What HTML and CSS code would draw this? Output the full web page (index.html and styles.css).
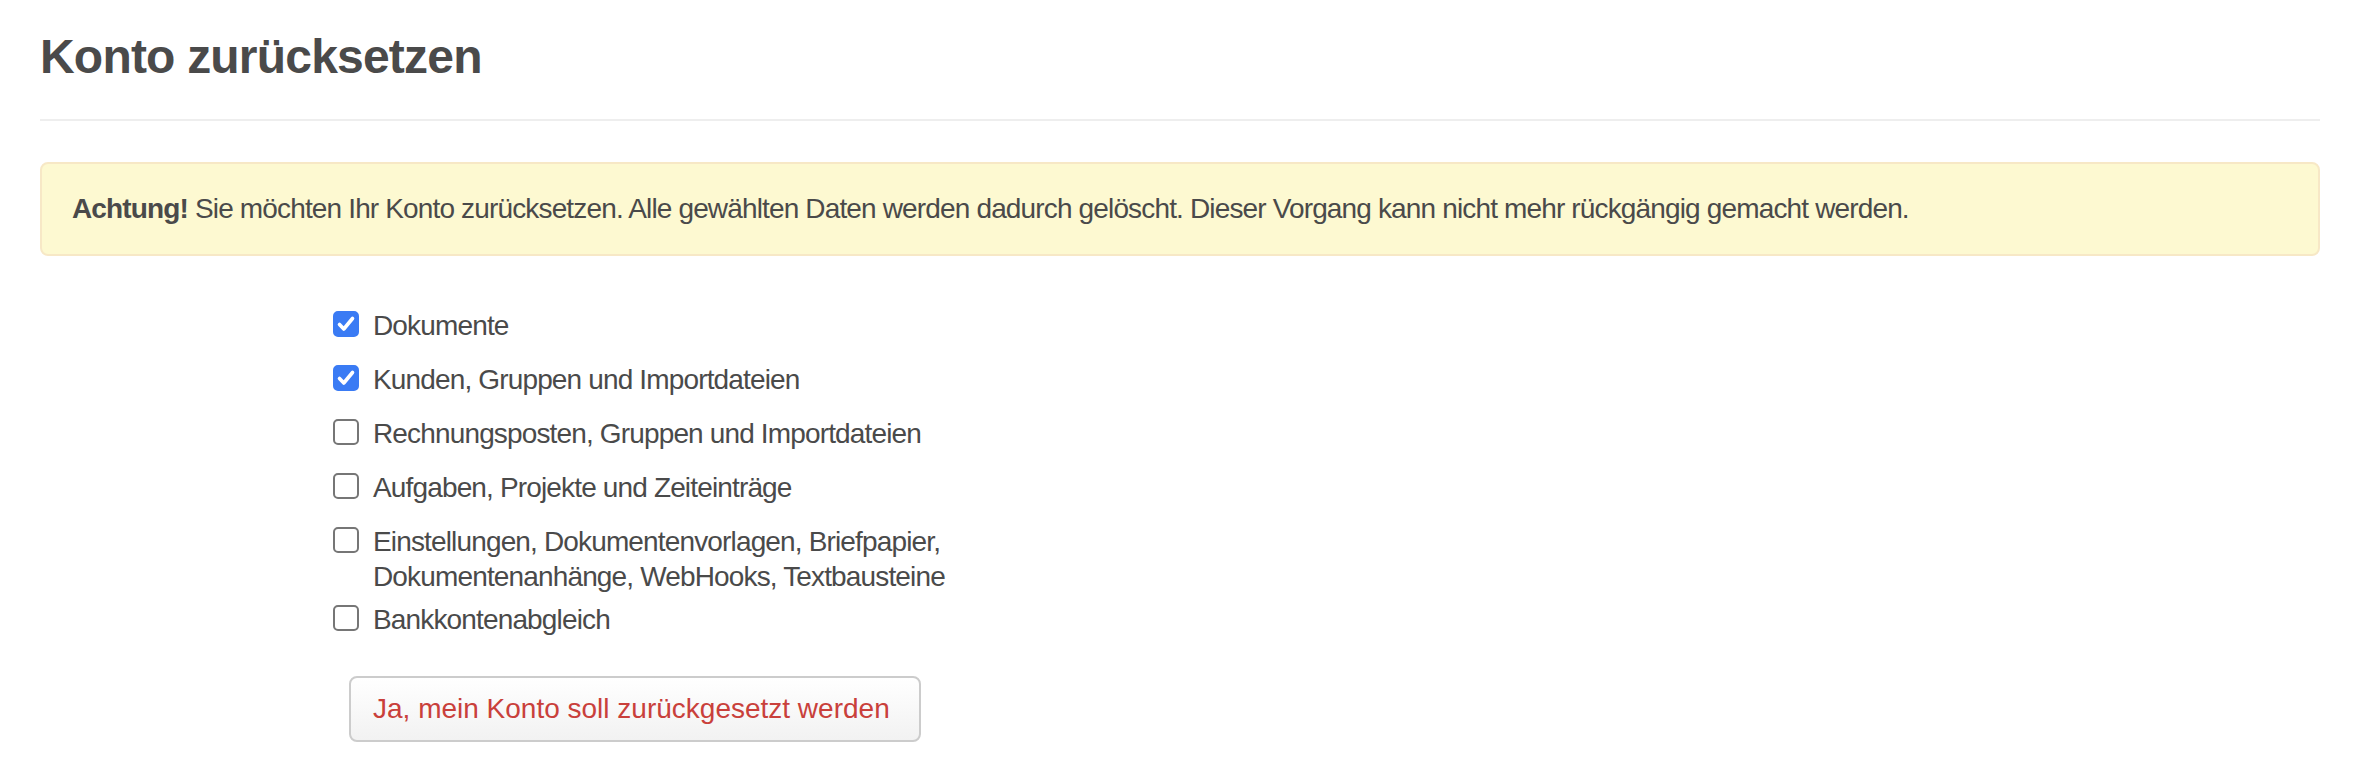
FILE: index.html
```html
<!DOCTYPE html>
<html lang="de">
<head>
  <meta charset="UTF-8" />
  <meta name="viewport" content="width=device-width, initial-scale=1.0"/>
  <title>Konto zurücksetzen</title>
  <link rel="stylesheet" href="styles.css">
</head>
<body>
  <div class="page-header">
    <h1>Konto zurücksetzen</h1>
  </div>

  <div class="alert">
    <strong>Achtung!</strong> Sie möchten Ihr Konto zurücksetzen. Alle gewählten Daten werden dadurch gelöscht. Dieser Vorgang kann nicht mehr rückgängig gemacht werden.
  </div>

  <form class="reset-form">
    <label class="option">
      <input type="checkbox" checked>
      <span class="box"><svg viewBox="0 0 26 26"><path d="M6.5 13.5 L10.8 18 L19.5 7.5"/></svg></span>
      <span class="text">Dokumente</span>
    </label>
    <label class="option">
      <input type="checkbox" checked>
      <span class="box"><svg viewBox="0 0 26 26"><path d="M6.5 13.5 L10.8 18 L19.5 7.5"/></svg></span>
      <span class="text">Kunden, Gruppen und Importdateien</span>
    </label>
    <label class="option">
      <input type="checkbox">
      <span class="box"><svg viewBox="0 0 26 26"><path d="M6.5 13.5 L10.8 18 L19.5 7.5"/></svg></span>
      <span class="text">Rechnungsposten, Gruppen und Importdateien</span>
    </label>
    <label class="option">
      <input type="checkbox">
      <span class="box"><svg viewBox="0 0 26 26"><path d="M6.5 13.5 L10.8 18 L19.5 7.5"/></svg></span>
      <span class="text">Aufgaben, Projekte und Zeiteinträge</span>
    </label>
    <label class="option">
      <input type="checkbox">
      <span class="box"><svg viewBox="0 0 26 26"><path d="M6.5 13.5 L10.8 18 L19.5 7.5"/></svg></span>
      <span class="text">Einstellungen, Dokumentenvorlagen, Briefpapier,<br>Dokumentenanhänge, WebHooks, Textbausteine</span>
    </label>
    <label class="option">
      <input type="checkbox">
      <span class="box"><svg viewBox="0 0 26 26"><path d="M6.5 13.5 L10.8 18 L19.5 7.5"/></svg></span>
      <span class="text">Bankkontenabgleich</span>
    </label>

    <button type="button" class="btn-reset">Ja, mein Konto soll zurückgesetzt werden</button>
  </form>
</body>
</html>
```

FILE: styles.css
```css
* {
  box-sizing: border-box;
}

body {
  margin: 0;
  padding: 0 40px;
  font-family: "Liberation Sans", Arial, Helvetica, sans-serif;
  font-size: 28px;
  line-height: 40px;
  letter-spacing: -0.85px;
  color: #4a4a4a;
  background-color: #fff;
}

.page-header {
  padding: 30px 0 36px;
  border-bottom: 2px solid #eeeeee;
}

.page-header h1 {
  margin: 0;
  font-size: 48px;
  line-height: 53px;
  font-weight: bold;
  letter-spacing: -0.8px;
  color: #4a4a4a;
}

.alert {
  margin-top: 41px;
  padding: 25px 30px;
  background-color: #fdf9d1;
  border: 2px solid #f7e8c6;
  border-radius: 8px;
}

.alert strong {
  font-weight: bold;
}

.reset-form {
  display: flex;
  flex-direction: column;
  align-items: flex-start;
  padding-left: 293px;
  margin-top: 50px;
}

.option {
  display: flex;
  align-items: flex-start;
  min-height: 54px;
  padding: 2px 0 6px;
  line-height: 35px;
  cursor: pointer;
}

.option input {
  display: none;
}

.box {
  flex: none;
  width: 26px;
  height: 26px;
  margin-top: 3px;
  margin-right: 14px;
  border: 2px solid #767676;
  border-radius: 5px;
  background-color: #fff;
}

.box svg {
  display: none;
  width: 26px;
  height: 26px;
  margin: -2px;
}

.box path {
  fill: none;
  stroke: #fff;
  stroke-width: 3.6;
  stroke-linecap: round;
  stroke-linejoin: round;
}

.option input:checked + .box {
  background-color: #3a7bf4;
  border-color: #3a7bf4;
}

.option input:checked + .box svg {
  display: block;
}

.btn-reset {
  margin-top: 22px;
  margin-left: 16px;
  padding: 11px 29px 11px 22px;
  font-family: inherit;
  font-size: 28px;
  line-height: 40px;
  letter-spacing: 0;
  color: #c9403b;
  background: linear-gradient(to bottom, #ffffff, #f2f2f2);
  border: 2px solid #cccccc;
  border-radius: 8px;
  cursor: pointer;
}
```
